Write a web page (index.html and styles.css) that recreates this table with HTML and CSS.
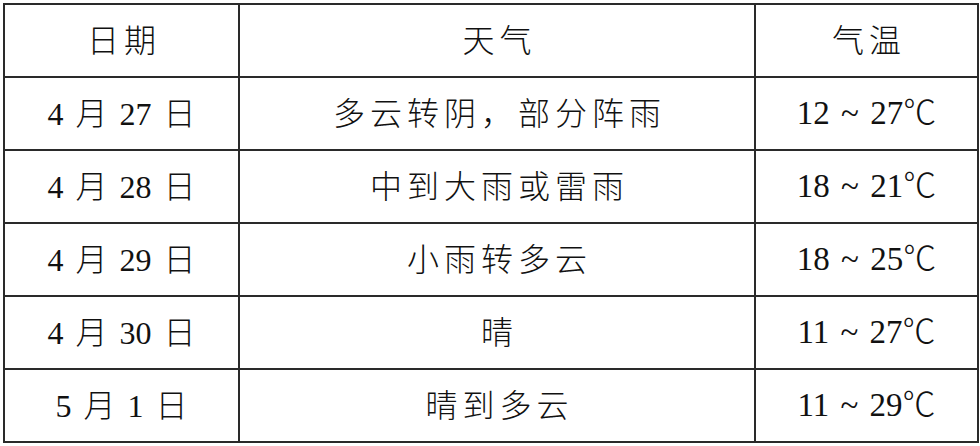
FILE: index.html
```html
<!DOCTYPE html>
<html lang="zh-CN">
<head>
<meta charset="utf-8">
<title>天气预报</title>
<link rel="stylesheet" href="styles.css">
</head>
<body>
<table class="weather">
  <colgroup>
    <col class="c-date">
    <col class="c-wx">
    <col class="c-temp">
  </colgroup>
  <tr class="head"><td>日期</td><td>天气</td><td>气温</td></tr>
  <tr><td class="date">4 月 27 日</td><td class="wx">多云转阴，部分阵雨</td><td class="temp">12 ~ 27℃</td></tr>
  <tr><td class="date">4 月 28 日</td><td class="wx">中到大雨或雷雨</td><td class="temp">18 ~ 21℃</td></tr>
  <tr><td class="date">4 月 29 日</td><td class="wx">小雨转多云</td><td class="temp">18 ~ 25℃</td></tr>
  <tr><td class="date">4 月 30 日</td><td class="wx">晴</td><td class="temp">11 ~ 27℃</td></tr>
  <tr><td class="date">5 月 1 日</td><td class="wx">晴到多云</td><td class="temp">11 ~ 29℃</td></tr>
</table>
</body>
</html>
```
FILE: styles.css
```css
html, body {
  margin: 0;
  padding: 0;
  background: #fff;
}
body {
  padding: 3px 0 0 3px;
}
.weather {
  border-collapse: collapse;
  table-layout: fixed;
  width: 974px;
  font-family: "Liberation Serif", "Noto Sans CJK SC", serif;
  font-size: 32px;
  font-weight: 300;
  color: #111;
}
.c-date { width: 235px; }
.c-wx { width: 516px; }
.c-temp { width: 223px; }
.weather td {
  border: 2px solid #2a2a2a;
  height: 71px;
  padding: 0;
  text-align: center;
  vertical-align: middle;
  line-height: 1;
  white-space: nowrap;
}
.head td {
  letter-spacing: 5px;
  padding-left: 5px;
}
.weather td.wx {
  letter-spacing: 5px;
  padding-left: 5px;
}
.weather td.date {
  word-spacing: 4px;
}
.weather td.temp {
  word-spacing: 3px;
  font-size: 33px;
}
```
